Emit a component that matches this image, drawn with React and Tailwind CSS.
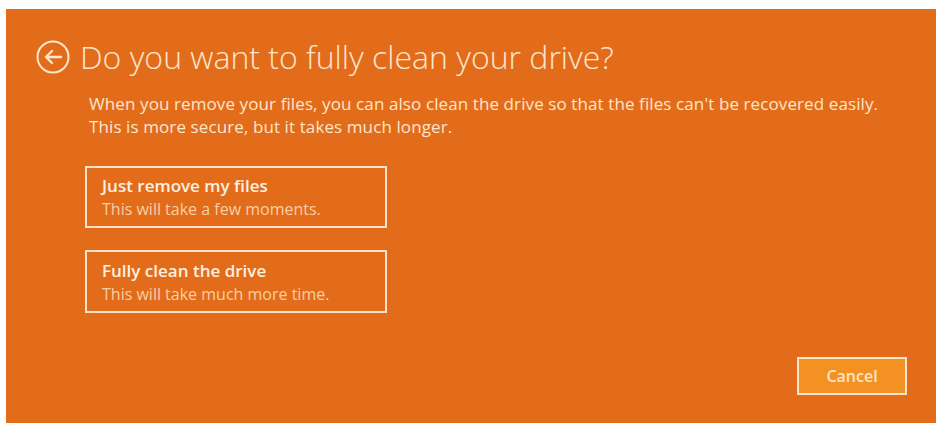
export default function App() {
  return (
    <main className="w-[940px] h-[429px] bg-white pt-[9px] pl-[6px] font-['Open_Sans',sans-serif]">
      <div className="w-[930px] h-[414px] bg-[#e36c1b] flex flex-col text-[#fce6cc]">
        <div className="flex items-center pl-[30px] pt-[31px]">
          <svg width="34" height="34" viewBox="0 0 34 34" fill="none" className="shrink-0">
            <circle cx="17" cy="17" r="15.5" stroke="#fce6cc" strokeWidth="2" />
            <path d="M25 17H10M16 11l-6 6 6 6" stroke="#fce6cc" strokeWidth="2.4" strokeLinecap="round" strokeLinejoin="round" />
          </svg>
          <h1 className="ml-[10px] text-[32px] font-light leading-none">
            Do you want to fully clean your drive?
          </h1>
        </div>

        <p className="ml-[83px] mt-[18px] text-[17px] leading-[23px] tracking-[0.1px]">
          When you remove your files, you can also clean the drive so that the files can't be recovered easily.
          <br />
          This is more secure, but it takes much longer.
        </p>

        <div className="ml-[79px] mt-[28px] flex flex-col gap-[22px]">
          <button className="w-[302px] h-[62px] border-2 border-[#fbe4c9] text-left pl-[15px] flex flex-col justify-center">
            <span className="text-[17px] font-semibold leading-[25px] text-[#fdf0e0]">Just remove my files</span>
            <span className="text-[16px] leading-[23px] text-[#f8cfa5]">This will take a few moments.</span>
          </button>
          <button className="w-[302px] h-[63px] border-2 border-[#fbe4c9] text-left pl-[15px] flex flex-col justify-center">
            <span className="text-[17px] font-semibold leading-[25px] text-[#fdf0e0]">Fully clean the drive</span>
            <span className="text-[16px] leading-[23px] text-[#f8cfa5]">This will take much more time.</span>
          </button>
        </div>

        <div className="flex justify-end pr-[29px] mt-auto mb-[28px]">
          <button className="w-[110px] h-[38px] bg-[#f39222] border-2 border-[#fbe4c9] text-[16px] font-semibold text-[#fce4c4]">
            Cancel
          </button>
        </div>
      </div>
    </main>
  );
}
